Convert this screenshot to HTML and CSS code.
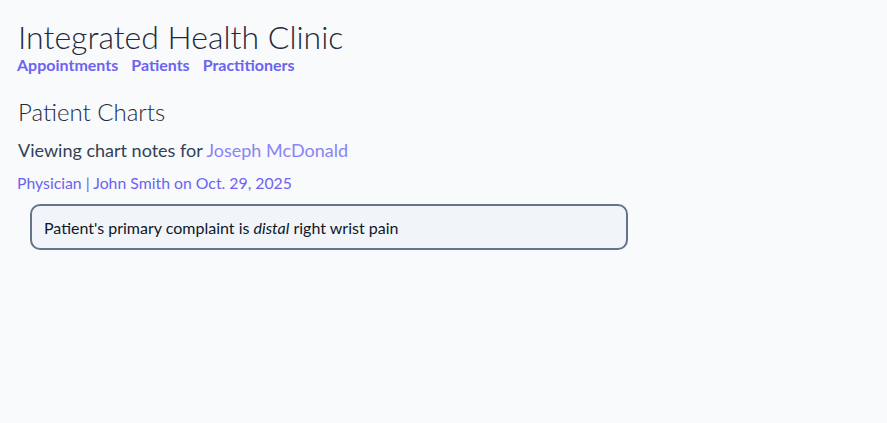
FILE: index.html
```html
<!DOCTYPE html>
<html lang="en">
<head>
<meta charset="utf-8">
<title>Integrated Health Clinic</title>
<link rel="stylesheet" href="styles.css">
</head>
<body>
<header class="site-header">
  <h1 class="site-title">Integrated Health Clinic</h1>
  <nav class="site-nav">
    <a href="#">Appointments</a>
    <a href="#">Patients</a>
    <a href="#">Practitioners</a>
  </nav>
</header>
<main class="content">
  <h2 class="page-title">Patient Charts</h2>
  <p class="viewing">Viewing chart notes for <a class="patient-link" href="#">Joseph McDonald</a></p>
  <p class="note-meta">Physician | John Smith on Oct. 29, 2025</p>
  <div class="note-card">Patient's primary complaint is <em>distal</em> right wrist pain</div>
</main>
</body>
</html>
```
FILE: styles.css
```css
html, body {
  margin: 0;
  background: #f8fafc;
}
body {
  padding: 18px 18px;
  font-family: Lato, "Noto Sans", sans-serif;
  color: #1e293b;
}
.site-title {
  margin: 0;
  font-size: 32px;
  font-weight: 300;
  line-height: 38px;
  color: #1e293b;
}
.site-nav {
  display: flex;
  gap: 13px;
  margin-top: 0;
  margin-left: -1px;
}
.site-nav a {
  font-size: 16px;
  font-weight: 700;
  color: #6c63f0;
  text-decoration: none;
  line-height: 18px;
}
.content {
  margin-top: 24px;
}
.page-title {
  margin: 0;
  font-size: 24px;
  font-weight: 300;
  line-height: 28px;
  color: #1e293b;
}
.viewing {
  margin: 13px 0 0;
  font-size: 18px;
  font-weight: 400;
  line-height: 22px;
  color: #334155;
}
.patient-link {
  color: #8a84f5;
  text-decoration: none;
}
.note-meta {
  margin: 12px 0 0 -1px;
  font-size: 15.8px;
  line-height: 19px;
  color: #6c63f0;
}
.note-card {
  margin: 12px 0 0 12px;
  width: 570px;
  padding: 12px 12px 11px;
  border: 2px solid #64748b;
  border-radius: 10px;
  background: #f1f5f9;
  font-size: 16px;
  line-height: 19px;
  color: #0f172a;
}
```
